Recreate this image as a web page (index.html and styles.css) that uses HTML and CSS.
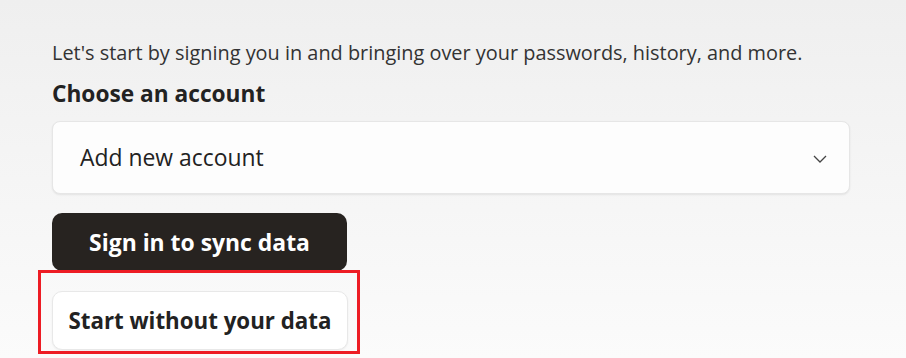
FILE: index.html
```html
<!DOCTYPE html>
<html lang="en">
<head>
  <meta charset="UTF-8" />
  <meta name="viewport" content="width=device-width, initial-scale=1.0"/>
  <title>Sign in</title>
  <link rel="stylesheet" href="styles.css">
</head>
<body>
  <div class="setup">
    <p class="intro">Let's start by signing you in and bringing over your passwords, history, and more.</p>
    <h2 class="label">Choose an account</h2>

    <div class="account-select">
      <span>Add new account</span>
      <svg class="chevron" width="14" height="8" viewBox="0 0 14 8">
        <path d="M1 1 L7 7 L13 1" fill="none" stroke="#444" stroke-width="1.3"/>
      </svg>
    </div>

    <button class="btn btn-primary">Sign in to sync data</button>

    <div class="highlight-wrap">
      <button class="btn btn-secondary">Start without your data</button>
      <div class="highlight"></div>
    </div>
  </div>
</body>
</html>
```

FILE: styles.css
```css
* {
  box-sizing: border-box;
  margin: 0;
  padding: 0;
}

body {
  font-family: 'Open Sans', 'Noto Sans', sans-serif;
  background: linear-gradient(to bottom, #efefef, #fbfbfb);
  min-height: 100vh;
  color: #1f1f1f;
}

.setup {
  padding: 41px 56px 0 52px;
  display: flex;
  flex-direction: column;
  align-items: flex-start;
}

.intro {
  font-size: 19.9px;
  color: #333;
  line-height: 24px;
  white-space: nowrap;
}

.label {
  font-size: 22.7px;
  font-weight: 700;
  line-height: 28px;
  margin-top: 15px;
  color: #222;
}

.account-select {
  width: 798px;
  height: 73px;
  margin-top: 13px;
  background: #fdfdfd;
  border: 1px solid #e6e6e6;
  border-radius: 8px;
  box-shadow: 0 1px 2px rgba(0, 0, 0, 0.08);
  display: flex;
  align-items: center;
  justify-content: space-between;
  padding: 0 22px 0 27px;
  font-size: 22.9px;
  color: #222;
}

.chevron {
  margin-top: 2px;
}

.btn {
  font-family: inherit;
  font-weight: 700;
  border-radius: 10px;
  cursor: pointer;
}

.btn-primary {
  margin-top: 19px;
  width: 295px;
  height: 58px;
  background: #272320;
  color: #fff;
  border: none;
  font-size: 22.9px;
}

.highlight-wrap {
  position: relative;
  margin-top: 20px;
}

.btn-secondary {
  width: 296px;
  height: 59px;
  background: #fff;
  color: #222;
  border: 1px solid #e8e8e8;
  box-shadow: 0 1px 2px rgba(0, 0, 0, 0.06);
  font-size: 22.3px;
}

.highlight {
  position: absolute;
  left: -14px;
  top: -21px;
  right: -12px;
  bottom: -4px;
  border: 3px solid #ed1c24;
  pointer-events: none;
}
```
